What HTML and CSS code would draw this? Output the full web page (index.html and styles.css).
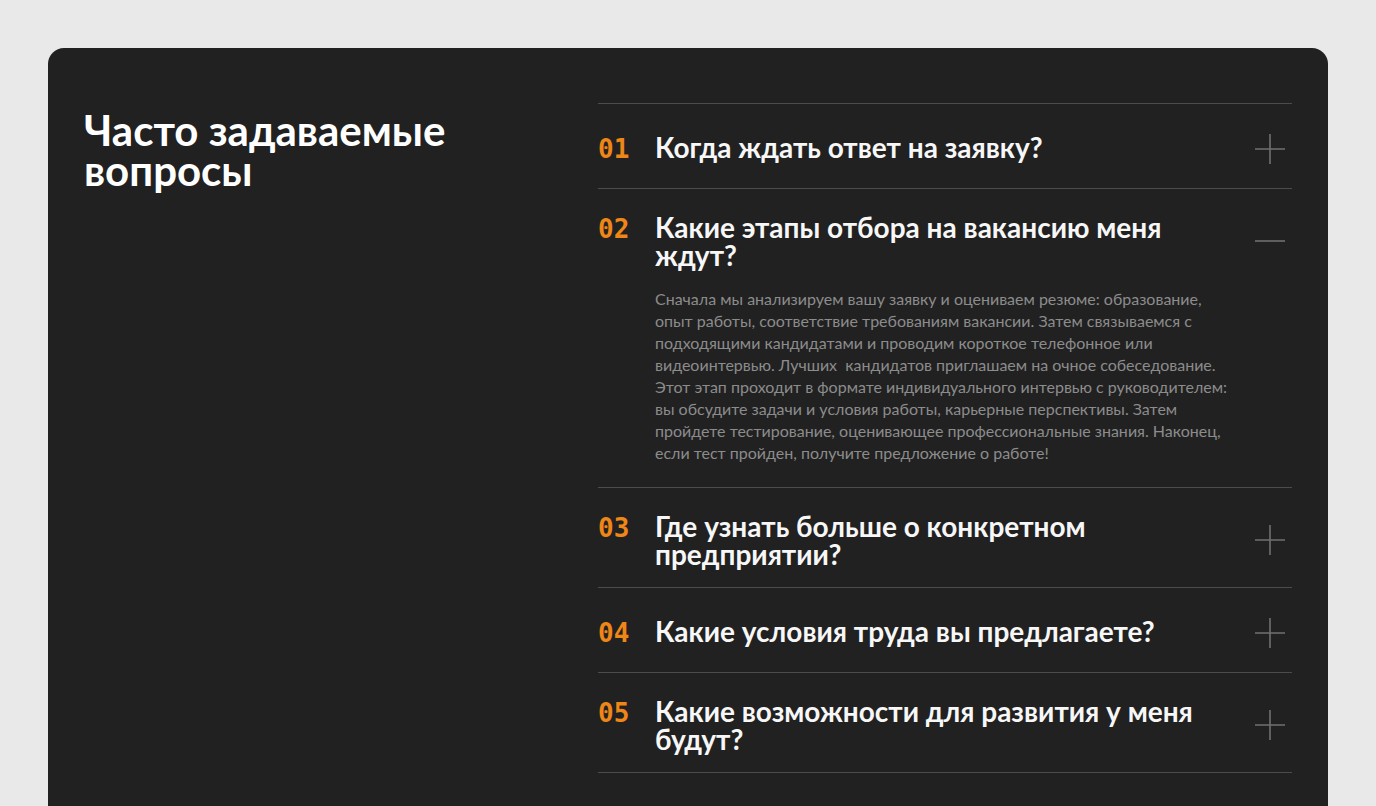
FILE: index.html
```html
<!DOCTYPE html>
<html lang="ru">
<head>
  <meta charset="UTF-8">
  <title>Часто задаваемые вопросы</title>
  <link rel="stylesheet" href="styles.css">
</head>
<body>
  <section class="faq">
    <h2 class="faq-title">Часто задаваемые вопросы</h2>

    <div class="faq-list">
      <div class="faq-item">
        <div class="faq-head">
          <div class="faq-q"><span class="faq-num">01</span><span class="faq-text">Когда ждать ответ на заявку?</span></div>
          <span class="faq-icon">
            <svg viewBox="0 0 30 30" width="30" height="30"><path d="M0 15H30M15 0V30"/></svg>
          </span>
        </div>
      </div>

      <div class="faq-item open">
        <div class="faq-head">
          <div class="faq-q"><span class="faq-num">02</span><span class="faq-text">Какие этапы отбора на вакансию меня ждут?</span></div>
          <span class="faq-icon">
            <svg viewBox="0 0 30 30" width="30" height="30"><path d="M0 15H30"/></svg>
          </span>
        </div>
        <p class="faq-answer">Сначала мы анализируем вашу заявку и оцениваем резюме: образование, опыт работы, соответствие требованиям вакансии. Затем связываемся с подходящими кандидатами и проводим короткое телефонное или видеоинтервью. Лучших&nbsp; кандидатов приглашаем на очное собеседование. Этот этап проходит в формате индивидуального интервью с руководителем: вы обсудите задачи и условия работы, карьерные перспективы. Затем пройдете тестирование, оценивающее профессиональные знания. Наконец, если тест пройден, получите предложение о работе!</p>
      </div>

      <div class="faq-item">
        <div class="faq-head">
          <div class="faq-q"><span class="faq-num">03</span><span class="faq-text">Где узнать больше о конкретном предприятии?</span></div>
          <span class="faq-icon">
            <svg viewBox="0 0 30 30" width="30" height="30"><path d="M0 15H30M15 0V30"/></svg>
          </span>
        </div>
      </div>

      <div class="faq-item">
        <div class="faq-head">
          <div class="faq-q"><span class="faq-num">04</span><span class="faq-text">Какие условия труда вы предлагаете?</span></div>
          <span class="faq-icon">
            <svg viewBox="0 0 30 30" width="30" height="30"><path d="M0 15H30M15 0V30"/></svg>
          </span>
        </div>
      </div>

      <div class="faq-item">
        <div class="faq-head">
          <div class="faq-q"><span class="faq-num">05</span><span class="faq-text">Какие возможности для развития у меня будут?</span></div>
          <span class="faq-icon">
            <svg viewBox="0 0 30 30" width="30" height="30"><path d="M0 15H30M15 0V30"/></svg>
          </span>
        </div>
      </div>
    </div>
  </section>
</body>
</html>
```

FILE: styles.css
```css
body {
  margin: 0;
  padding: 48px 48px 0;
  background: #e9e9e9;
  font-family: Lato, "Noto Sans", sans-serif;
}
.faq {
  display: grid;
  grid-template-columns: 1fr 694px;
  padding: 55px 36px 80px;
  background: #212121;
  border-radius: 16px;
}
.faq-title {
  margin: 0;
  padding-top: 7px;
  font-size: 42px;
  line-height: 40px;
  font-weight: 700;
  color: #fff;
}
.faq-list {
  border-top: 1px solid #4c4c4c;
}
.faq-item {
  border-bottom: 1px solid #4c4c4c;
}
.faq-head {
  display: flex;
  align-items: center;
  min-height: 41px;
  padding: 24px 0 19px;
  cursor: pointer;
}
.faq-q {
  flex: 1;
  display: flex;
  align-items: baseline;
  padding-right: 24px;
}
.faq-num {
  flex: none;
  width: 57px;
  font-family: "DejaVu Sans Mono", monospace;
  font-size: 26px;
  font-weight: 700;
  color: #ee8618;
}
.faq-text {
  font-size: 28px;
  line-height: 28px;
  font-weight: 700;
  color: #f7f7f7;
}
.faq-icon {
  flex: none;
  width: 40px;
  height: 40px;
  margin-right: 2px;
  display: flex;
  align-items: center;
  justify-content: center;
}
.faq-icon path {
  stroke: #707070;
  stroke-width: 1.6;
  fill: none;
}
.faq-answer {
  margin: 0;
  padding: 0 64px 23px 57px;
  font-size: 16px;
  line-height: 22px;
  color: #8c8c8c;
}
```
